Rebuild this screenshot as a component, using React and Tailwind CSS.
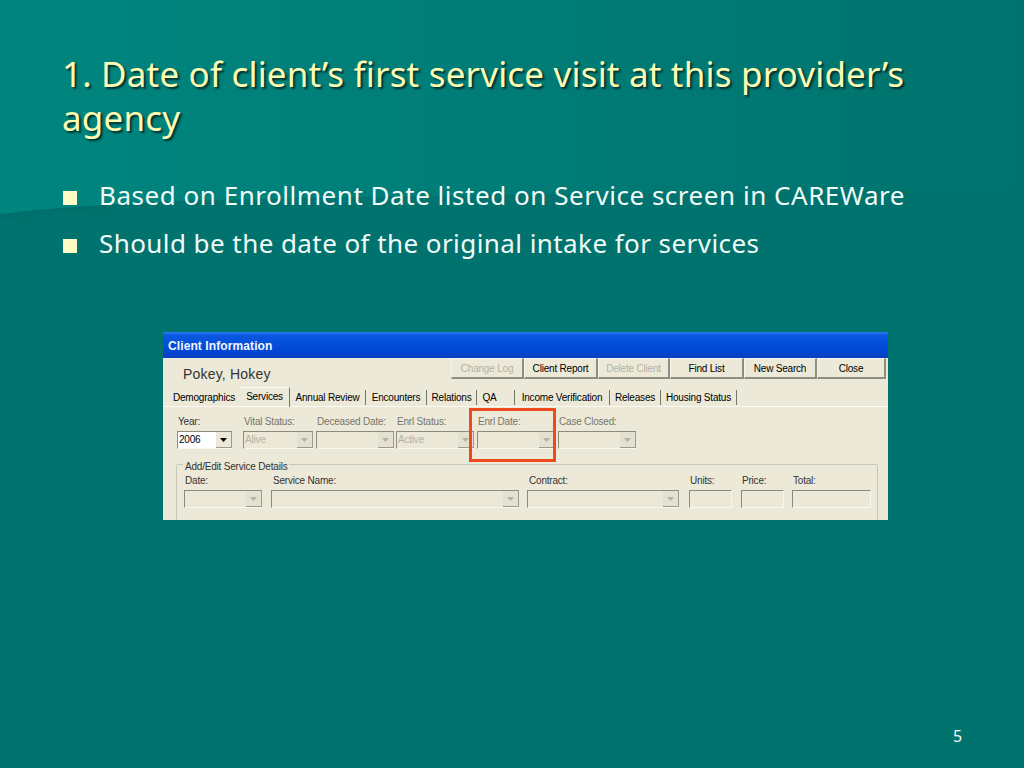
import React from "react";

const uiFont = "font-['Liberation_Sans',sans-serif] tracking-[-0.2px]";

const Arrow = ({ dark }) => (
  <span className={`flex h-[16px] w-[16px] items-center justify-center border-b border-r border-[#9c9a8c] ${dark ? "bg-[#ece9d8]" : "bg-[#e4e1d0]"}`}>
    <svg width="7" height="4" viewBox="0 0 7 4">
      <path d="M0 0h7L3.5 4z" fill={dark ? "#000000" : "#b4b2a4"} />
    </svg>
  </span>
);

const Combo = ({ className, value, active }) => (
  <div
    className={`flex h-[18px] items-center justify-between border-l border-t border-[#8d8b7c] pl-[1px] text-[10px] leading-none ${
      active ? "border-b border-b-[#f8f7f0] bg-white text-black" : "border-b border-b-[#f8f7f0] bg-[#ebe8d7] text-[#b3b1a3]"
    } ${className}`}
  >
    <span>{value}</span>
    <Arrow dark={active} />
  </div>
);

const Input = ({ className }) => (
  <div className={`h-[18px] border border-[#8d8b7c] border-b-[#f8f7f0] border-r-[#f8f7f0] ${className}`} />
);

const Field = ({ label, labelClass = "text-[#77766b]", className, children }) => (
  <div className={`flex flex-col ${className}`}>
    <span className={`h-[16px] whitespace-nowrap pl-[1px] text-[10px] leading-[13px] ${labelClass}`}>{label}</span>
    {children}
  </div>
);

const ToolButton = ({ label, disabled, className }) => (
  <div
    className={`flex h-[21px] items-center justify-center border border-b-2 border-r-2 border-[#f5f4ea] border-b-[#8f8d7e] border-r-[#8f8d7e] text-[10px] ${
      disabled ? "text-[#b4b2a4]" : "text-black"
    } ${className}`}
  >
    {label}
  </div>
);

const tabs = [
  ["Demographics", "w-[72px] border-r-0"],
  ["Services", "w-[50px]"],
  ["Annual Review", "w-[76px]"],
  ["Encounters", "w-[61px]"],
  ["Relations", "w-[50px]"],
  ["QA", "w-[38px] pr-[12px]"],
  ["Income Verification", "w-[95px]"],
  ["Releases", "w-[51px]"],
  ["Housing Status", "w-[76px]"],
];

const ClientWindow = () => (
  <div className={`relative ml-[163px] mt-[73px] h-[188px] w-[725px] overflow-hidden bg-[#ece9d8] text-black ${uiFont}`}>
    <div className="flex h-[26px] items-center bg-[linear-gradient(180deg,#2f7cf0_0%,#0a58e0_12%,#0048d6_70%,#0a3fc0_100%)] pl-[5px] pt-[2px] text-[12px] font-bold tracking-[0.1px] text-[#f2f6ff]">
      Client Information
    </div>

    <div className="flex h-[29px] items-start pl-[20px]">
      <span className="w-[268px] shrink-0 whitespace-nowrap pt-[8px] text-[14px] leading-[16px] tracking-[0.2px] text-[#333333]">Pokey, Hokey</span>
      <div className="flex">
        <ToolButton label="Change Log" disabled className="w-[73px]" />
        <ToolButton label="Client Report" className="w-[74px]" />
        <ToolButton label="Delete Client" disabled className="w-[72px]" />
        <ToolButton label="Find List" className="w-[74px]" />
        <ToolButton label="New Search" className="w-[73px]" />
        <ToolButton label="Close" className="w-[69px]" />
      </div>
    </div>

    <div className="flex h-[20px] items-end border-b border-[#fbfaf4] pl-[5px]">
      {tabs.map(([name, width]) => (
        <span
          key={name}
          className={`flex items-center justify-center whitespace-nowrap border-r border-[#77766b] text-[10px] ${width} ${
            name === "Services" ? "mb-[-1px] h-[20px] border-t border-t-[#fbfaf4] pb-[3px]" : "mb-[1px] h-[15px]"
          }`}
        >
          {name}
        </span>
      ))}
    </div>

    <div className="ml-[14px] mt-[8px] flex">
      <Field label="Year:" labelClass="text-[#333333]" className="mr-[11px]">
        <Combo active value="2006" className="w-[55px]" />
      </Field>
      <Field label="Vital Status:" className="mr-[3px]">
        <Combo value="Alive" className="w-[70px]" />
      </Field>
      <Field label="Deceased Date:" className="mr-[2px]">
        <Combo className="w-[78px]" />
      </Field>
      <Field label="Enrl Status:" className="mr-[3px]">
        <Combo value="Active" className="w-[78px]" />
      </Field>
      <Field label="Enrl Date:" className="mr-[3px]">
        <Combo className="w-[78px]" />
      </Field>
      <Field label="Case Closed:">
        <Combo className="w-[78px]" />
      </Field>
    </div>

    <div className="relative ml-[13px] mt-[15px] h-[70px] w-[702px] rounded-t-[2px] border border-[#c9c7b8] pl-[7px] pt-[9px]">
      <span className="absolute left-[6px] top-[-4px] bg-[#ece9d8] px-[2px] text-[10px] leading-[12px] text-[#333333]">Add/Edit Service Details</span>
      <div className="flex">
        <Field label="Date:" labelClass="text-[#333333]" className="mr-[9px]">
          <Combo className="w-[78px]" />
        </Field>
        <Field label="Service Name:" labelClass="ml-[1px] text-[#333333]" className="mr-[8px]">
          <Combo className="w-[248px]" />
        </Field>
        <Field label="Contract:" labelClass="ml-[1px] text-[#333333]" className="mr-[10px]">
          <Combo className="w-[152px]" />
        </Field>
        <Field label="Units:" labelClass="text-[#333333]" className="mr-[9px]">
          <Input className="w-[43px]" />
        </Field>
        <Field label="Price:" labelClass="text-[#333333]" className="mr-[8px]">
          <Input className="w-[43px]" />
        </Field>
        <Field label="Total:" labelClass="text-[#333333]">
          <Input className="w-[79px]" />
        </Field>
      </div>
    </div>

    {/* red box marking the enrollment date */}
    <div className="absolute left-[306px] top-[76px] h-[54px] w-[87px] border-[3px] border-[#ee4a1c]" />
  </div>
);

const Bullet = ({ children, className, spacing }) => (
  <div className={`flex items-center ${className}`}>
    <span className="ml-[1px] mt-[6px] h-[14px] w-[14px] bg-[#fefdc8]" />
    <span className={`ml-[22px] whitespace-nowrap text-[26px] leading-[32px] text-[#f0fbf8] ${spacing}`}>{children}</span>
  </div>
);

export default function App() {
  return (
    <div className="relative h-[768px] w-[1024px] overflow-hidden bg-[#00736e] font-['Noto_Sans',sans-serif]">
      {/* background swoosh */}
      <svg className="absolute inset-0" width="1024" height="768" viewBox="0 0 1024 768">
        <defs>
          <linearGradient id="top" x1="0" y1="0" x2="1" y2="0">
            <stop offset="0" stopColor="#00867f" />
            <stop offset="0.6" stopColor="#007a75" />
            <stop offset="1" stopColor="#00736e" />
          </linearGradient>
        </defs>
        <path d="M0 0H1024V190C800 190 400 195 220 200C120 203 50 208 0 214Z" fill="url(#top)" />
        <path d="M0 214C50 208 120 203 220 200C120 206 50 212 0 220Z" fill="#006e69" opacity="0.7" />
      </svg>

      <div className="relative flex h-full flex-col">
        <h1 className="ml-[62px] mt-[52px] w-[880px] text-[35px] font-normal leading-[44px] tracking-[0.18px] text-[#fdfcb4] [text-shadow:2px_2px_2px_#00302c]">
          1. Date of client’s first service visit at this provider’s agency
        </h1>
        <Bullet className="ml-[62px] mt-[39px]" spacing="tracking-[0.53px]">Based on Enrollment Date listed on Service screen in CAREWare</Bullet>
        <Bullet className="ml-[62px] mt-[16px]" spacing="tracking-[0.43px]">Should be the date of the original intake for services</Bullet>
        <ClientWindow />
        <div className="absolute left-[953px] top-[726px] text-[16px] leading-[20px] text-[#f0fbf8]">5</div>
      </div>
    </div>
  );
}
